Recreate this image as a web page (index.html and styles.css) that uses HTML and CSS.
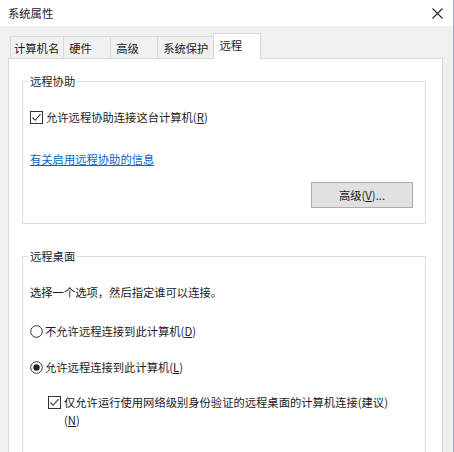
FILE: index.html
```html
<!DOCTYPE html>
<html lang="zh-CN">
<head>
    <meta charset="UTF-8">
    <title>系统属性</title>
    <link rel="stylesheet" href="styles.css">
</head>
<body>
    <div class="window">
        <div class="titlebar">
            <span class="title">系统属性</span>
            <svg class="close" width="11" height="11" viewBox="0 0 11 11">
                <path d="M0.5 0.5 L10.5 10.5 M10.5 0.5 L0.5 10.5" stroke="#222" stroke-width="1.1" fill="none"/>
            </svg>
        </div>

        <div class="tabs">
            <div class="tab">计算机名</div>
            <div class="tab">硬件</div>
            <div class="tab">高级</div>
            <div class="tab">系统保护</div>
            <div class="tab active">远程</div>
        </div>

        <div class="panel">
            <fieldset class="group">
                <legend>远程协助</legend>
                <label class="option first">
                    <svg class="check" width="13" height="13" viewBox="0 0 13 13">
                        <rect x="0.5" y="0.5" width="12" height="12" fill="#fff" stroke="#333"/>
                        <path d="M2.5 6.5 L5.2 9.3 L10.5 3.2" stroke="#333" stroke-width="1.1" fill="none"/>
                    </svg>
                    <span>允许远程协助连接这台计算机(<u>R</u>)</span>
                </label>
                <a class="link" href="#">有关启用远程协助的信息</a>
                <div class="actions">
                    <button class="btn">高级(<u>V</u>)...</button>
                </div>
            </fieldset>

            <fieldset class="group second">
                <legend>远程桌面</legend>
                <p class="hint">选择一个选项，然后指定谁可以连接。</p>
                <label class="option radio-row">
                    <svg class="radio" width="13" height="13" viewBox="0 0 13 13">
                        <circle cx="6.5" cy="6.5" r="5.8" fill="#fff" stroke="#333"/>
                    </svg>
                    <span>不允许远程连接到此计算机(<u>D</u>)</span>
                </label>
                <label class="option radio-row tight">
                    <svg class="radio" width="13" height="13" viewBox="0 0 13 13">
                        <circle cx="6.5" cy="6.5" r="5.8" fill="#fff" stroke="#333"/>
                        <circle cx="6.5" cy="6.5" r="3.2" fill="#222"/>
                    </svg>
                    <span>允许远程连接到此计算机(<u>L</u>)</span>
                </label>
                <label class="option sub">
                    <svg class="check" width="13" height="13" viewBox="0 0 13 13">
                        <rect x="0.5" y="0.5" width="12" height="12" fill="#fff" stroke="#333"/>
                        <path d="M2.5 6.5 L5.2 9.3 L10.5 3.2" stroke="#333" stroke-width="1.1" fill="none"/>
                    </svg>
                    <span>仅允许运行使用网络级别身份验证的远程桌面的计算机连接(建议)<br>(<u>N</u>)</span>
                </label>
            </fieldset>
        </div>
    </div>
</body>
</html>
```

FILE: styles.css
```css
body {
    margin: 0;
    font-family: "Noto Sans CJK SC", "Liberation Sans", sans-serif;
    font-size: 11.3px;
    color: #1a1a1a;
    background-color: #f0f0f0;
    overflow: hidden;
}
.window {
    width: 453px;
    height: 452px;
    border-right: 1px solid #9fb3cf;
    background-color: #f0f0f0;
    overflow: hidden;
}
.titlebar {
    height: 26px;
    background-color: #fff;
    display: flex;
    align-items: center;
    justify-content: space-between;
    padding: 0 10px 0 8px;
}
.title {
    line-height: 16px;
}
.close {
    display: block;
}
.tabs {
    display: flex;
    align-items: flex-end;
    height: 25px;
    margin-top: 7px;
    padding-left: 10px;
}
.tab {
    box-sizing: border-box;
    height: 22px;
    min-width: 48px;
    padding: 3px 4px 0 3px;
    margin-right: -1px;
    line-height: 16px;
    border: 1px solid #d9d9d9;
    border-bottom: none;
    background-color: #f0f0f0;
}
.tab:nth-child(2),
.tab:nth-child(3),
.tab:nth-child(4) {
    padding: 3px 5px 0 5px;
}
.tab.active {
    height: 26px;
    margin-bottom: -1px;
    padding: 3px 6px 0 5px;
    background-color: #fff;
    position: relative;
    z-index: 1;
}
.panel {
    height: 500px;
    margin: 0 10px 0 8px;
    padding-top: 14px;
    background-color: #fff;
    border: 1px solid #d9d9d9;
    box-sizing: border-box;
}
.group {
    margin: 0 16px 0 13px;
    padding: 0 12px 15px 7px;
    border: 1px solid #dcdcdc;
}
.group legend {
    padding: 0 2px;
    margin-left: -2px;
    line-height: 16px;
}
.group.second {
    margin-top: 24px;
    padding-bottom: 60px;
}
.option {
    display: flex;
    align-items: flex-start;
    line-height: 18px;
}
.option svg {
    flex-shrink: 0;
    margin-top: 3px;
}
.check {
    margin-right: 3px;
}
.radio {
    margin-right: 2px;
}
.option.first {
    margin-top: 19px;
}
.link {
    display: block;
    margin-top: 24px;
    line-height: 18px;
    color: #0066cc;
    text-decoration: underline;
}
.actions {
    display: flex;
    justify-content: flex-end;
    margin-top: 14px;
}
.btn {
    width: 102px;
    height: 26px;
    font-family: inherit;
    font-size: 11.3px;
    color: #1a1a1a;
    background-color: #e1e1e1;
    border: 1px solid #adadad;
    padding: 0;
}
.hint {
    margin: 19px 0 0;
    line-height: 18px;
}
.radio-row {
    margin-top: 21px;
}
.radio-row.tight {
    margin-top: 18px;
}
.option.sub {
    margin-top: 17px;
    padding-left: 18px;
}
```
